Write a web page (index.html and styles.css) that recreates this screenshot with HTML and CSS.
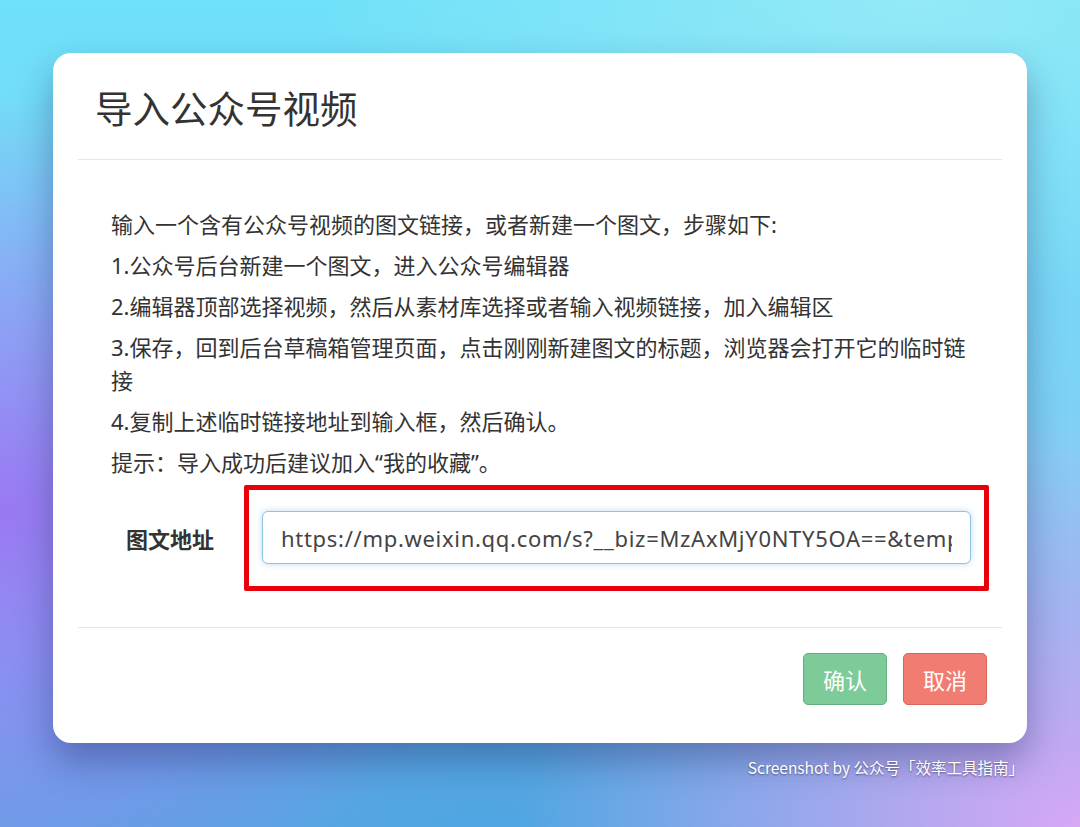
FILE: index.html
```html
<!DOCTYPE html>
<html lang="zh-CN">
<head>
    <meta charset="UTF-8">
    <meta name="viewport" content="width=device-width, initial-scale=1.0">
    <title>导入公众号视频</title>
    <link rel="stylesheet" href="styles.css">
</head>
<body>
    <div class="dialog">
        <div class="dialog-header">
            <h1>导入公众号视频</h1>
        </div>

        <div class="dialog-body">
            <p>输入一个含有公众号视频的图文链接，或者新建一个图文，步骤如下:</p>
            <p>1.公众号后台新建一个图文，进入公众号编辑器</p>
            <p>2.编辑器顶部选择视频，然后从素材库选择或者输入视频链接，加入编辑区</p>
            <p>3.保存，回到后台草稿箱管理页面，点击刚刚新建图文的标题，浏览器会打开它的临时链接</p>
            <p>4.复制上述临时链接地址到输入框，然后确认。</p>
            <p>提示：导入成功后建议加入“我的收藏”。</p>

            <div class="form-row">
                <label for="url">图文地址</label>
                <div class="highlight">
                    <input type="text" id="url" value="https://mp.weixin.qq.com/s?__biz=MzAxMjY0NTY5OA==&amp;tempkey=MTEwNl9kZWZhdWx0">
                </div>
            </div>
        </div>

        <div class="dialog-footer">
            <button class="btn btn-ok">确认</button>
            <button class="btn btn-cancel">取消</button>
        </div>
    </div>

    <div class="credit">Screenshot by 公众号「效率工具指南」</div>
</body>
</html>
```

FILE: styles.css
```css
html, body {
    height: 100%;
}
body {
    margin: 0;
    overflow: hidden;
    font-family: "Noto Sans", "Noto Sans CJK SC", sans-serif;
    color: #333;
    background:
        radial-gradient(ellipse 520px 420px at 0% 62%, #9a78f3 0%, rgba(154,120,243,0) 100%),
        radial-gradient(ellipse 560px 420px at 100% 100%, #d6a8f5 0%, rgba(214,168,245,0) 100%),
        radial-gradient(ellipse 700px 300px at 45% 100%, #4fa6e2 0%, rgba(79,166,226,0) 100%),
        radial-gradient(ellipse 600px 300px at 85% 0%, #93e9f7 0%, rgba(147,233,247,0) 100%),
        linear-gradient(180deg, #6fe1f9 0%, #7fd0f4 55%, #6aa6e6 100%);
}
.dialog {
    width: 974px;
    margin: 53px 0 0 53px;
    background: #fff;
    border-radius: 18px;
    box-shadow: 0 18px 36px rgba(20, 30, 80, 0.35);
}
.dialog-header {
    margin: 0 25px;
    height: 106px;
    border-bottom: 1px solid #e6e6e6;
}
.dialog-header h1 {
    margin: 0;
    padding-left: 17px;
    font-size: 37.5px;
    font-weight: normal;
    line-height: 108px;
    color: #333;
    font-family: "Noto Sans CJK SC", sans-serif;
}
.dialog-body {
    margin: 0 25px;
    padding: 48px 0 36px 33px;
    border-bottom: 1px solid #e6e6e6;
}
.dialog-body p {
    margin: 0 0 8px;
    font-size: 22px;
    line-height: 33px;
    color: #333;
    padding-right: 30px;
}
.form-row {
    display: flex;
    align-items: center;
    margin-top: -2px;
    padding-left: 15px;
}
.form-row label {
    font-family: "Noto Sans CJK SC", sans-serif;
    font-size: 22px;
    font-weight: bold;
    color: #333;
    width: 118px;
}
.highlight {
    border: 5px solid #e8000b;
    border-radius: 2px;
    padding: 21px 13px 22px;
}
.highlight input {
    box-sizing: border-box;
    width: 709px;
    height: 53px;
    padding: 0 18px;
    border: 1px solid #8ec3e6;
    border-radius: 6px;
    box-shadow: 0 0 6px rgba(102, 175, 233, 0.45);
    font-family: "Noto Sans", sans-serif;
    font-size: 22px;
    color: #444;
    letter-spacing: 0.7px;
    outline: none;
}
.dialog-footer {
    display: flex;
    justify-content: flex-end;
    gap: 16px;
    padding: 25px 40px 38px 0;
}
.btn {
    width: 84px;
    height: 52px;
    border-radius: 5px;
    font-family: "Noto Sans CJK SC", sans-serif;
    font-size: 22px;
    color: #fff;
    cursor: pointer;
}
.btn-ok {
    background: #7dcb98;
    border: 1px solid #62b07d;
}
.btn-cancel {
    background: #f17d72;
    border: 1px solid #d9665c;
}
.credit {
    width: 1024px;
    margin-top: 13px;
    text-align: right;
    font-family: "Noto Sans CJK SC", sans-serif;
    font-size: 15.5px;
    color: #fff;
    text-shadow: 0 1px 2px rgba(0, 0, 0, 0.45);
}
```
